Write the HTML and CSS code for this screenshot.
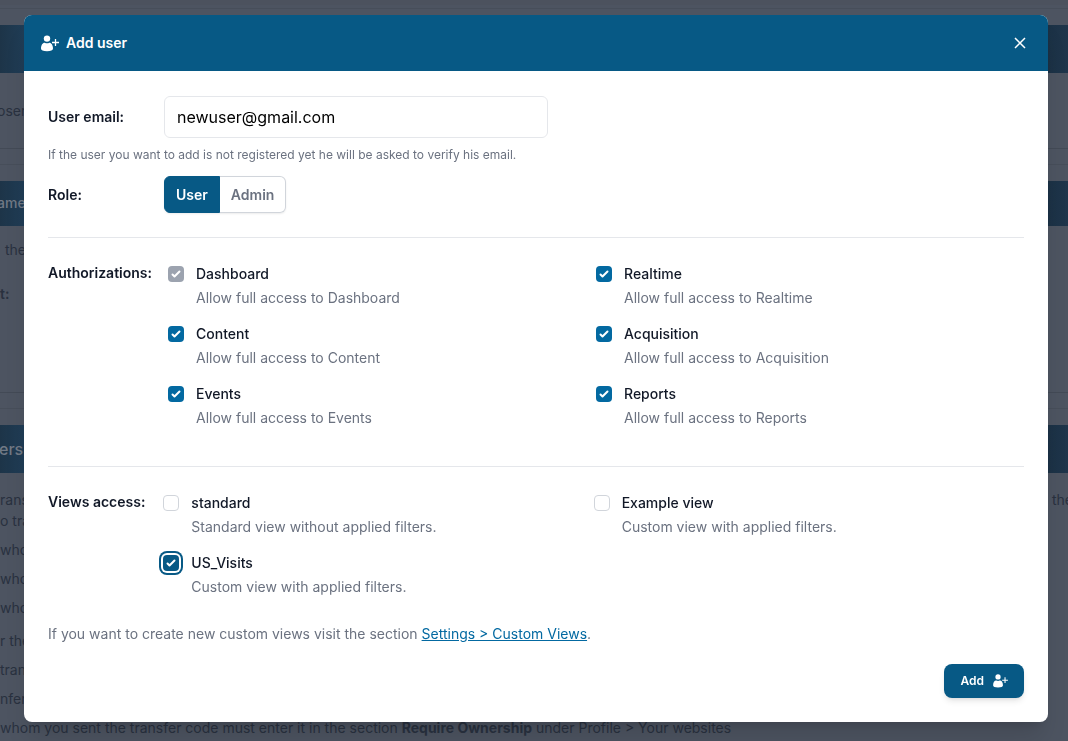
FILE: index.html
```html
<!DOCTYPE html>
<html lang="en">
<head>
<meta charset="utf-8">
<title>Add user</title>
<link rel="stylesheet" href="styles.css">
</head>
<body>
<svg class="sprite" aria-hidden="true">
  <symbol id="user-plus" viewBox="0 0 18 17">
    <circle cx="6" cy="3.6" r="3.2"/>
    <path d="M0 13.6C0 9.900 2 7.500 4 7.900c1.400.6 2.700.6 4 0 2-.4 4 2 4 5.700 0 1.700-2.200 2.700-6 2.700s-6-1-6-2.700z"/>
    <path d="M14.500 4v7M11 7.500h7" fill="none" stroke="currentColor" stroke-width="1.300"/>
  </symbol>
</svg>
<main class="page" aria-hidden="true">
  <section class="card">
    <div class="band"></div>
    <div class="card-body card-short">oser</div>
  </section>
  <section class="card">
    <div class="band band-small">ame</div>
    <div class="card-body card-tall"><p class="indent">the</p><p class="strong">t:</p></div>
  </section>
  <section class="card">
    <div class="band">ers</div>
    <div class="steps">
      <p class="intro"><span>rans<br>o tra</span><span class="intro-end">the</span></p>
      <p>who</p><p>who</p><p>who</p>
      <p class="spaced">r the</p><p>tran</p><p>nfer</p>
      <p>whom you sent the transfer code must enter it in the section <b>Require Ownership</b> under Profile &gt; Your websites</p>
    </div>
  </section>
</main>

<div class="overlay">
<form class="modal" role="dialog" aria-labelledby="title">
  <header class="modal-head">
    <svg class="icon-title"><use href="#user-plus"/></svg>
    <h1 id="title">Add user</h1>
    <button type="button" class="close" aria-label="Close"><svg viewBox="0 0 12 12"><path d="M1 1l10 10M11 1L1 11"/></svg></button>
  </header>
  <div class="modal-body">
    <div class="field">
      <label class="label" for="email">User email:</label>
      <input class="email" id="email" type="email" value="newuser@gmail.com">
    </div>
    <p class="hint">If the user you want to add is not registered yet he will be asked to verify his email.</p>
    <div class="field">
      <span class="label" id="role">Role:</span>
      <div class="roles" role="group" aria-labelledby="role">
        <button type="button" class="role active">User</button><button type="button" class="role">Admin</button>
      </div>
    </div>
    <hr>
    <div class="group">
      <span class="group-label">Authorizations:</span>
      <div class="options">
        <label class="option"><input type="checkbox" checked disabled><span class="name">Dashboard</span><span class="desc">Allow full access to Dashboard</span></label>
        <label class="option"><input type="checkbox" checked><span class="name">Realtime</span><span class="desc">Allow full access to Realtime</span></label>
        <label class="option"><input type="checkbox" checked><span class="name">Content</span><span class="desc">Allow full access to Content</span></label>
        <label class="option"><input type="checkbox" checked><span class="name">Acquisition</span><span class="desc">Allow full access to Acquisition</span></label>
        <label class="option"><input type="checkbox" checked><span class="name">Events</span><span class="desc">Allow full access to Events</span></label>
        <label class="option"><input type="checkbox" checked><span class="name">Reports</span><span class="desc">Allow full access to Reports</span></label>
      </div>
    </div>
    <hr class="lower">
    <div class="group views">
      <span class="group-label">Views access:</span>
      <div class="options">
        <label class="option"><input type="checkbox"><span class="name">standard</span><span class="desc">Standard view without applied filters.</span></label>
        <label class="option"><input type="checkbox"><span class="name">Example view</span><span class="desc">Custom view with applied filters.</span></label>
        <label class="option"><input type="checkbox" class="focused" checked><span class="name">US_Visits</span><span class="desc">Custom view with applied filters.</span></label>
      </div>
    </div>
    <p class="note">If you want to create new custom views visit the section <a href="#">Settings &gt; Custom Views</a>.</p>
    <div class="actions"><button type="button" class="add">Add <svg><use href="#user-plus"/></svg></button></div>
  </div>
</form>
</div>
</body>
</html>
```
FILE: styles.css
```css
* { box-sizing: border-box; }
body {
  margin: 0;
  height: 100vh;
  overflow: hidden;
  background: #4d5461;
  color: #111827;
  font: 14px/20px Inter, sans-serif;
}
p, h1 { margin: 0; }
button, input { font: inherit; }
.sprite { position: absolute; width: 0; height: 0; }

.page {
  border-top: 5px solid #4c525e;
  color: #29313f;
  white-space: nowrap;
}
.card {
  border-top: 1px solid #474e5a;
  padding-top: 16px;
}
.card:first-child { margin-top: 3px; }
.band {
  height: 48px;
  padding-top: 14px;
  background: linear-gradient(90deg, #1d3448, #203d56 24px, #1b3145 1048px, #1f354b);
  color: #717985;
  font-size: 16px;
  font-weight: 500;
  text-indent: -1px;
}
.band-small { height: 45px; padding-top: 12px; font-size: 14px; text-indent: -3px; }
.card-body { border-bottom: 1px solid #434a56; margin-bottom: 15px; }
.card-short { height: 76px; padding-top: 28px; text-indent: -3px; }
.card-tall { height: 167px; padding-top: 14px; }
.indent { padding-left: 5px; }
.strong { margin-top: 24px; font-weight: 600; }
.steps { padding-top: 16px; }
.steps p { margin-bottom: 9px; }
.intro { display: flex; justify-content: space-between; line-height: 21px; }
.intro-end { width: 16px; }
.steps .spaced { margin-top: 13px; }

.overlay {
  position: fixed;
  inset: 0;
  padding: 15px 20px 19px 24px;
}
.modal {
  border-radius: 8px;
  background: #fff;
  box-shadow: 0 20px 25px -5px rgba(0, 0, 0, .12), 0 8px 10px -6px rgba(0, 0, 0, .12);
}
.modal-head {
  display: flex;
  align-items: center;
  height: 56px;
  padding: 0 20px 0 17px;
  border-radius: 8px 8px 0 0;
  background: #075985;
  color: #fff;
}
.icon-title { width: 18px; height: 17px; fill: currentColor; }
.modal-head h1 { margin-left: 7px; font-size: 14px; font-weight: 600; }
.close {
  display: flex;
  margin-left: auto;
  padding: 2px;
  border: 0;
  background: none;
  color: inherit;
}
.close svg { width: 12px; height: 12px; fill: none; stroke: currentColor; stroke-width: 1.5; }

.modal-body { padding: 25px 24px 24px; }
.field { display: flex; align-items: center; }
.label { width: 116px; font-weight: 600; }
.email {
  width: 384px;
  height: 42px;
  padding: 0 12px;
  border: 1px solid #e5e7eb;
  border-radius: 6px;
  background: #fff;
  color: #000;
  font-size: 16px;
}
.hint { margin: 9px 0 13px; color: #6b7280; font-size: 12px; line-height: 16px; }
.roles { display: flex; border-radius: 6px; box-shadow: 0 1px 2px rgba(0, 0, 0, .08); }
.role {
  height: 37px;
  padding: 0 11px;
  border: 1px solid #d1d5db;
  border-left: 0;
  border-radius: 0 6px 6px 0;
  background: #fff;
  color: #6b7280;
  font-weight: 600;
}
.role.active {
  border: 1px solid #075985;
  border-radius: 6px 0 0 6px;
  background: #075985;
  color: #fff;
}
hr { height: 1px; margin: 24px 0; border: 0; background: #e5e7eb; }
.lower { margin-top: 36px; }
.group { display: flex; gap: 16px; }
.views { gap: 18px; }
.group-label { padding-top: 1px; font-weight: 600; }
.options {
  display: grid;
  flex: 1;
  grid-template-columns: 1fr 1fr;
  row-gap: 12px;
}
.option {
  display: grid;
  grid-template-columns: 16px 1fr;
  column-gap: 12px;
  align-items: center;
  line-height: 24px;
}
.option input {
  appearance: none;
  width: 16px;
  height: 16px;
  margin: 0;
  border: 1px solid #d1d5db;
  border-radius: 4px;
  background: #fff;
}
.option input:checked {
  border: 0;
  background: #0369a1 url("data:image/svg+xml,%3Csvg viewBox='0 0 16 16' fill='white' xmlns='http://www.w3.org/2000/svg'%3E%3Cpath d='M12.207 4.793a1 1 0 010 1.414l-5 5a1 1 0 01-1.414 0l-2-2a1 1 0 011.414-1.414L6.500 9.086l4.293-4.293a1 1 0 011.414 0z'/%3E%3C/svg%3E") center / 16px;
}
.option input:disabled { background-color: #9ca3af; }
.option .focused:checked {
  background-color: #075985;
  box-shadow: 0 0 0 2px #fff, 0 0 0 4px #075985;
}
.name { font-weight: 500; }
.desc { grid-column: 2; color: #6b7280; }
.note { margin-top: 25px; color: #6b7280; }
.note a { color: #0369a1; }
.actions { display: flex; justify-content: flex-end; margin-top: 20px; }
.add {
  display: flex;
  align-items: center;
  gap: 9px;
  height: 34px;
  padding: 0 16px;
  border: 0;
  border-radius: 8px;
  background: #075985;
  color: #fff;
  font-size: 12px;
  font-weight: 600;
  box-shadow: 0 4px 6px -1px rgba(0, 0, 0, .1), 0 2px 4px -2px rgba(0, 0, 0, .1);
}
.add svg { width: 15px; height: 14px; fill: currentColor; }
```
